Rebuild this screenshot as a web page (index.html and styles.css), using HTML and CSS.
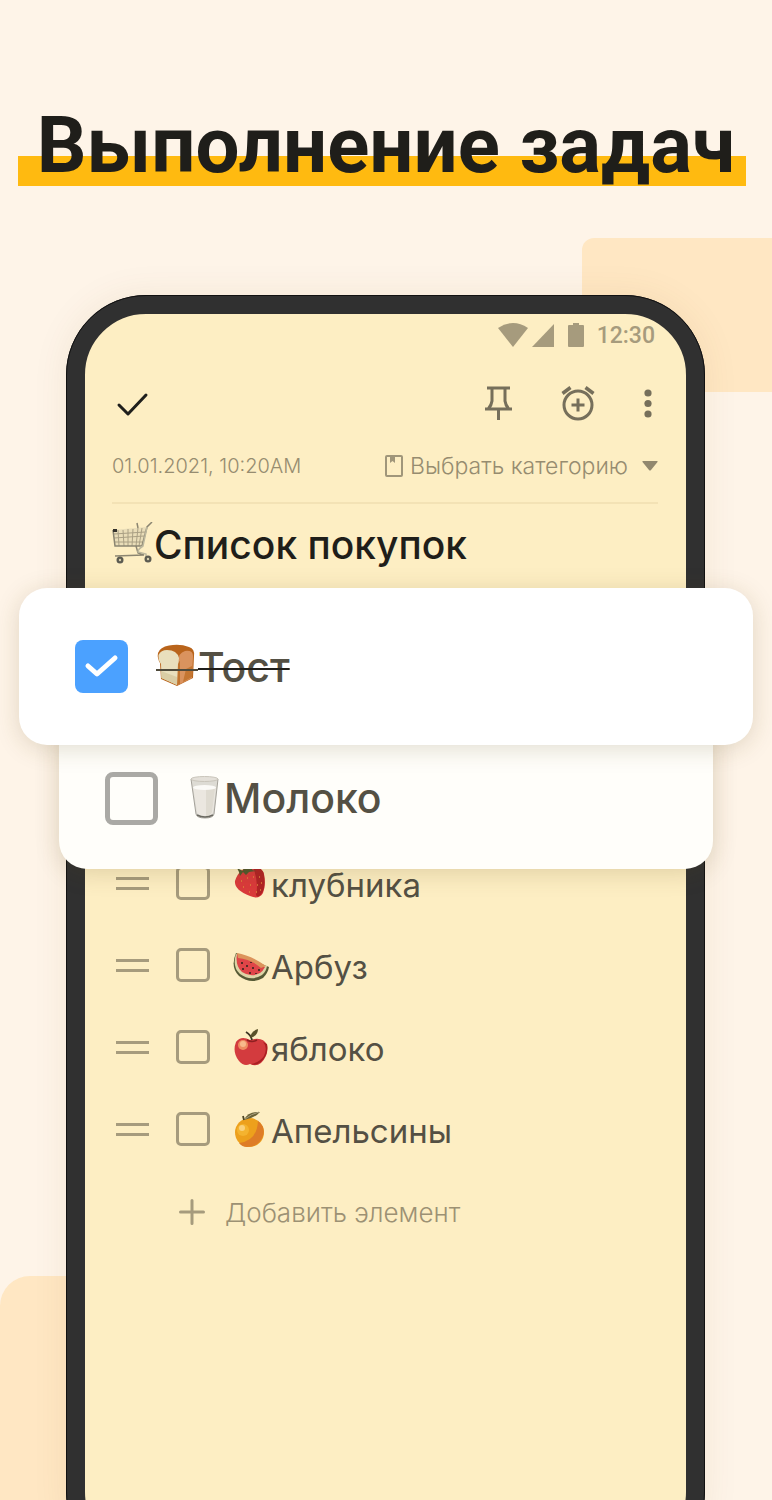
FILE: index.html
```html
<!DOCTYPE html>
<html lang="ru">
  <head>
    <meta charset="UTF-8" />
    <meta name="viewport" content="width=device-width, initial-scale=1.0" />
    <title>Выполнение задач</title>
    <link rel="stylesheet" href="styles.css">
  </head>
  <body>
    <main class="promo">
      <div class="block block-right"></div>
      <div class="block block-left"></div>

      <h1 class="headline">Выполнение задач</h1>

      <section class="phone">
        <div class="status-bar">
          <svg width="88" height="26" viewBox="0 0 88 26" fill="#a69b7d" aria-hidden="true">
            <path d="M0 6Q15-4 30 6L15 25z" />
            <path d="M34 25L56 2v23z" />
            <path d="M71 3h4V1h6v2h4a1 1 0 0 1 1 1v20a1 1 0 0 1-1 1H71a1 1 0 0 1-1-1V4a1 1 0 0 1 1-1z" />
          </svg>
          <span>12:30</span>
        </div>

        <div class="toolbar">
          <button class="icon-btn" type="button" aria-label="Готово">
            <svg width="40" height="40" viewBox="0 0 40 40" fill="none" stroke="#1f1f1c" stroke-width="3" stroke-linecap="round" stroke-linejoin="round"><path d="M7 22l9 9 18-19" /></svg>
          </button>
          <button class="icon-btn push" type="button" aria-label="Закрепить">
            <svg width="40" height="40" viewBox="0 0 40 40" fill="none" stroke="#766f5b" stroke-width="3"><path d="M9 5h23M14 5v13q-.5 4-3.500 7.500M27 5v13q.5 4 3.500 7.500M20.500 26v11M7 26h27" /></svg>
          </button>
          <button class="icon-btn" type="button" aria-label="Напоминание">
            <svg width="40" height="40" viewBox="0 0 40 40" fill="none" stroke="#766f5b" stroke-width="3"><circle cx="20" cy="22" r="14" /><path d="M20 15.500v13M13.500 22h13" /><path d="M4.500 10.500l8-6M35.500 10.500l-8-6" stroke-width="3.500" /></svg>
          </button>
          <button class="icon-btn" type="button" aria-label="Меню">
            <svg width="20" height="40" viewBox="0 0 20 40" fill="#766f5b"><circle cx="10" cy="10" r="3.600" /><circle cx="10" cy="20.500" r="3.600" /><circle cx="10" cy="31" r="3.600" /></svg>
          </button>
        </div>

        <div class="meta">
          <time datetime="2021-01-01T10:20">01.01.2021, 10:20AM</time>
          <label class="category">
            <svg width="20" height="24" viewBox="0 0 20 24" fill="none" stroke="#a0967a" stroke-width="2"><rect x="2" y="2" width="16" height="20" rx="1" /><path d="M6 2h5v7l-2.500-2L6 9z" fill="#a0967a" stroke="none" /></svg>
            <select aria-label="Категория">
              <option>Выбрать категорию</option>
            </select>
            <svg class="caret" width="16" height="10" viewBox="0 0 16 10" fill="#91886f"><path d="M1 0h14q1 0 .5 1L9 9q-1 1-2 0L.5 1Q0 0 1 0z" /></svg>
          </label>
        </div>

        <h2 class="note-title">
          <svg width="42" height="44" viewBox="0 0 42 44" fill="none" aria-hidden="true">
            <path d="M1 8l33-3-4 19H3z" fill="#e9ddb8" />
            <path d="M2 12l31-2M2 16l30-2M3 20h28M6 8l1 16M11 8l1 16M16 7v17M21 7l-1 17M26 6l-2 18M30 6l-3 18" stroke="#aaa084" />
            <path d="M1 8l2 16h27L35 5l5-5M25 1l1 5M24 24l2 7 6 2-29 1" stroke="#8b8571" stroke-width="1.500" />
            <path d="M35 5l-4 19q-5 3-5 6l8 2v5" stroke="#bdb89e" stroke-width="1.500" />
            <path d="M1 7h4v3H1z" fill="#34322b" />
            <circle cx="8" cy="38" r="3.500" fill="#5c5b51" /><circle cx="8" cy="38" r="1.200" fill="#d7cfae" />
            <circle cx="36" cy="37" r="3.500" fill="#5c5b51" /><circle cx="36" cy="37" r="1.200" fill="#d7cfae" />
          </svg>
          Список покупок
        </h2>

        <ul class="tasks">
          <li class="card card-front">
            <input class="check" type="checkbox" id="toast" checked>
            <label class="done" for="toast">
              <svg width="42" height="48" viewBox="0 0 42 48" aria-hidden="true">
                <path d="M2 10Q4 4 13 2.500q11-2 20 1.500 6 2 5 9l-1 22-16 8L5 36 4 20Q1 15 2 10z" fill="#b9641b" />
                <path d="M23 18q-1-8 6-10 8-1 8 5l-1 22-14 7z" fill="#da935e" />
                <path d="M21 20l3-2v23l-3 1z" fill="#c27530" />
                <path d="M30 26l6-3v11l-9 5z" fill="#c47632" />
                <path d="M2.500 12Q5 7 11 7q10 0 12 8 0 4-1 6l-1 21L5.500 35 5 21q-3-4-2.500-9z" fill="#e9dfbd" />
                <path d="M5 28l16 6v8L5.500 35z" fill="#dacda5" />
                <path d="M0 27h42" stroke="#4f4a3b" stroke-width="2" />
              </svg>
              <s>Тост</s>
            </label>
          </li>
          <li class="card card-back">
            <input class="check" type="checkbox" id="milk">
            <label for="milk">
              <svg width="34" height="44" viewBox="0 0 34 44" aria-hidden="true">
                <path d="M1 3h27l-4 35q-1 4-9 4t-9-4z" fill="#dddbd4" />
                <path d="M3 11h23l-3 25q-1 4-8 4t-8-4z" fill="#ebe7e0" />
                <path d="M16 13h9l-3 23q-2 4-6 4z" fill="#dfdbd1" />
                <ellipse cx="14.500" cy="11.500" rx="11.500" ry="2.500" fill="#fbfaf7" />
                <path d="M1 3l5 35q1 4 9 4t9-4l4-35" fill="none" stroke="#a5a29a" />
                <ellipse cx="14.500" cy="3" rx="13.500" ry="2.500" fill="#e4e0d9" stroke="#c9c5bb" />
                <path d="M7 39q8 4 16 0" fill="none" stroke="#6b6961" stroke-width="1.500" />
              </svg>
              Молоко
            </label>
          </li>
          <li class="task">
            <span class="handle"></span>
            <input class="check" type="checkbox" id="strawberry">
            <label for="strawberry">
              <svg width="38" height="40" viewBox="0 0 38 40" aria-hidden="true">
                <path d="M2 16Q6 3 18 2q11-1 13 7 2 12-1 19-4 7-13 3Q1 25 2 16z" fill="#da3a3b" />
                <path d="M20 2q10 0 11 8 2 12-2 18-4 6-6 2Q26 18 20 2z" fill="#b12325" />
                <path d="M8 16h1M14 13h1M20 12h1M26 12h1M10 22h1M17 20h1M24 20h1M16 27h1M23 27h1M28 18h1M27 25h1" stroke="#e0853c" stroke-width="1.500" />
                <path d="M1 8l5-1-2-4 6 3 1-6 4 4 5-4-1 5 4 1-7 1-3 3-3-3-3 4-1-4z" fill="#52582d" />
              </svg>
              клубника
            </label>
          </li>
          <li class="task">
            <span class="handle"></span>
            <input class="check" type="checkbox" id="watermelon">
            <label for="watermelon">
              <svg width="38" height="40" viewBox="0 0 38 40" aria-hidden="true">
                <path d="M3 6Q-3 20 6 29q12 9 24 2 5-5 6-11z" fill="#565a35" />
                <path d="M3 7q-4 13 4 20 11 8 22 1 4-3 5-9z" fill="#ddd5a6" />
                <path d="M4 7q-2 12 5 18 9 6 18 1 3-2 5-6z" fill="#df4548" />
                <path d="M4 6q13 2 29 13l-5 2Q18 12 5 11z" fill="#dc935b" />
                <path d="M9 15v2M14 18v2M20 20v2M26 22v2M10 21v2M17 25v2M23 26v1M18 15v1" stroke="#4a2822" stroke-width="1.800" />
              </svg>
              Арбуз
            </label>
          </li>
          <li class="task">
            <span class="handle"></span>
            <input class="check" type="checkbox" id="apple">
            <label for="apple">
              <svg width="38" height="40" viewBox="0 0 38 40" aria-hidden="true">
                <path d="M17 11Q8 6 3 13q-4 10 3 19 5 6 11 3 6 3 11-1 8-8 6-18-4-9-17-5z" fill="#d33b3e" />
                <path d="M30 13q5 5 1 14-4 6-13 8 5 2 10-2 8-8 6-18z" fill="#a91f22" />
                <circle cx="10" cy="16" r="5" fill="#ee8c61" /><circle cx="10" cy="15" r="3" fill="#f7b98b" />
                <path d="M19 11q-1-5-6-8" fill="none" stroke="#3c3323" stroke-width="1.800" />
                <path d="M17 9q1-7 8-9 0 7-8 9z" fill="#5a5129" />
                <path d="M14 11q5 3 10 0" fill="none" stroke="#8d1f20" stroke-width="1.500" />
              </svg>
              яблоко
            </label>
          </li>
          <li class="task">
            <span class="handle"></span>
            <input class="check" type="checkbox" id="oranges">
            <label for="oranges">
              <svg width="38" height="40" viewBox="0 0 38 40" aria-hidden="true">
                <circle cx="16.500" cy="21.500" r="14.500" fill="#eda01c" />
                <path d="M25 10q8 6 5 15-4 11-16 11-5 0-8-4 18-2 19-22z" fill="#de7c26" />
                <circle cx="10" cy="19" r="6" fill="#f4b32f" /><circle cx="9" cy="17" r="3" fill="#fad17c" />
                <path d="M10 5l1 4" stroke="#4d4423" stroke-width="1.800" />
                <path d="M11 9Q15 0 27 1q-5 6-16 8z" fill="#6a6237" />
                <path d="M12 8q6-5 14-7" fill="none" stroke="#aaa080" />
              </svg>
              Апельсины
            </label>
          </li>
        </ul>

        <button class="add-item" type="button">
          <svg width="26" height="26" viewBox="0 0 26 26" stroke="#a69b7d" stroke-width="3" stroke-linecap="round"><path d="M13 1.500v23M1.500 13h23" /></svg>
          Добавить элемент
        </button>
      </section>
    </main>
  </body>
</html>
```
FILE: styles.css
```css
/* ------------ Global Styles ------------ */
* {
  margin: 0;
  padding: 0;
  box-sizing: border-box;
}
body {
  font-family: Inter, "Noto Sans", sans-serif;
  background: #fef4e8;
  color: #545044;
}
button,
select {
  border: none;
  background: none;
  color: inherit;
  font: inherit;
  cursor: pointer;
}
svg {
  display: block;
  flex-shrink: 0;
}

.promo {
  position: relative;
  display: flex;
  flex-direction: column;
  height: 100vh;
  min-height: 1300px;
  overflow: hidden;
}

/* ------------ Background blocks ------------ */
.block {
  position: absolute;
  background: #ffe7c3;
}
.block-right {
  top: 238px;
  right: 0;
  width: 190px;
  height: 154px;
  border-radius: 12px 0 0 0;
}
.block-left {
  bottom: 0;
  left: 0;
  width: 190px;
  height: 224px;
  border-radius: 30px 0 0 0;
}

.headline {
  margin: 98px 26px 101px 18px;
  padding-left: 8px;
  background: linear-gradient(transparent 58px, #ffba10 58px, #ffba10 88px, transparent 88px);
  color: #1f1e1a;
  font-family: Roboto, sans-serif;
  font-size: 78px;
  font-weight: 700;
  line-height: 96px;
  text-align: center;
  white-space: nowrap;
}

/* ------------ Phone ------------ */
.phone {
  position: relative;
  flex: 1;
  margin: 0 67px -72px 66px;
  padding: 0 28px 0 27px;
  border: 19px solid #303030;
  border-radius: 80px;
  outline: 1px solid #111;
  outline-offset: -1px;
  background: #fdeec3;
  box-shadow: 0 0 36px rgba(120, 80, 20, 0.08);
}
.status-bar {
  display: flex;
  justify-content: flex-end;
  align-items: center;
  gap: 11px;
  height: 42px;
  padding-right: 3px;
  color: #a69b7d;
  font-family: Roboto, sans-serif;
  font-size: 23px;
  font-weight: 500;
}
.toolbar {
  display: flex;
  align-items: center;
  gap: 40px;
  height: 94px;
}
.push {
  margin-left: auto;
}
.meta {
  display: flex;
  justify-content: space-between;
  align-items: center;
  height: 54px;
  padding-bottom: 20px;
  border-bottom: 2px solid #f3e2b5;
  color: #968c70;
  font-size: 20px;
  font-weight: 300;
}
.category {
  display: flex;
  align-items: center;
  font-size: 23px;
}
.category select {
  appearance: none;
  margin-left: 6px;
  outline: none;
}
.caret {
  margin-left: 14px;
}
.note-title {
  display: flex;
  align-items: center;
  height: 84px;
  padding-bottom: 4px;
  color: #1f1e1a;
  font-size: 39px;
  font-weight: 500;
  white-space: nowrap;
}

/* ------------ Task list ------------ */
.tasks {
  list-style: none;
}
.tasks label {
  display: flex;
  align-items: center;
}
.check {
  appearance: none;
  flex-shrink: 0;
  width: 34px;
  height: 34px;
  border: 3px solid #a69b7d;
  border-radius: 5px;
}
.card {
  position: relative;
  display: flex;
  align-items: center;
  border-radius: 28px;
  box-shadow: 0 4px 24px rgba(90, 70, 20, 0.18);
  font-size: 41px;
  font-weight: 500;
}
.card .check {
  width: 53px;
  height: 53px;
  border: 5px solid #aaa9a5;
  border-radius: 8px;
}
.card .check:checked {
  border: none;
  background: #4ba1ff url("data:image/svg+xml,%3Csvg xmlns='http://www.w3.org/2000/svg' viewBox='0 0 53 53'%3E%3Cpath d='M13 26l9 8 18-16' fill='none' stroke='white' stroke-width='5' stroke-linecap='round' stroke-linejoin='round'/%3E%3C/svg%3E");
}
.card-front {
  z-index: 3;
  gap: 28px;
  height: 157px;
  margin: 0 -95px 0 -93px;
  padding: 0 56px;
  background: #fff;
}
.card-back {
  z-index: 2;
  gap: 32px;
  height: 152px;
  margin: -28px -55px -27px -53px;
  padding: 10px 46px 0;
  background: #fffefa;
}
.done s {
  text-decoration-color: #1f1e1a;
  text-decoration-thickness: 2px;
}
.task {
  display: flex;
  align-items: center;
  height: 82px;
  padding-left: 4px;
  font-size: 33px;
}
.handle {
  width: 33px;
  height: 13px;
  margin-right: 27px;
  border: solid #a69b7d;
  border-width: 3px 0;
}
.task label {
  margin-left: 23px;
  padding-top: 3px;
}
.add-item {
  display: flex;
  align-items: center;
  gap: 20px;
  height: 84px;
  padding-left: 67px;
  color: #9c9174;
  font-size: 26px;
  font-weight: 300;
}
```
